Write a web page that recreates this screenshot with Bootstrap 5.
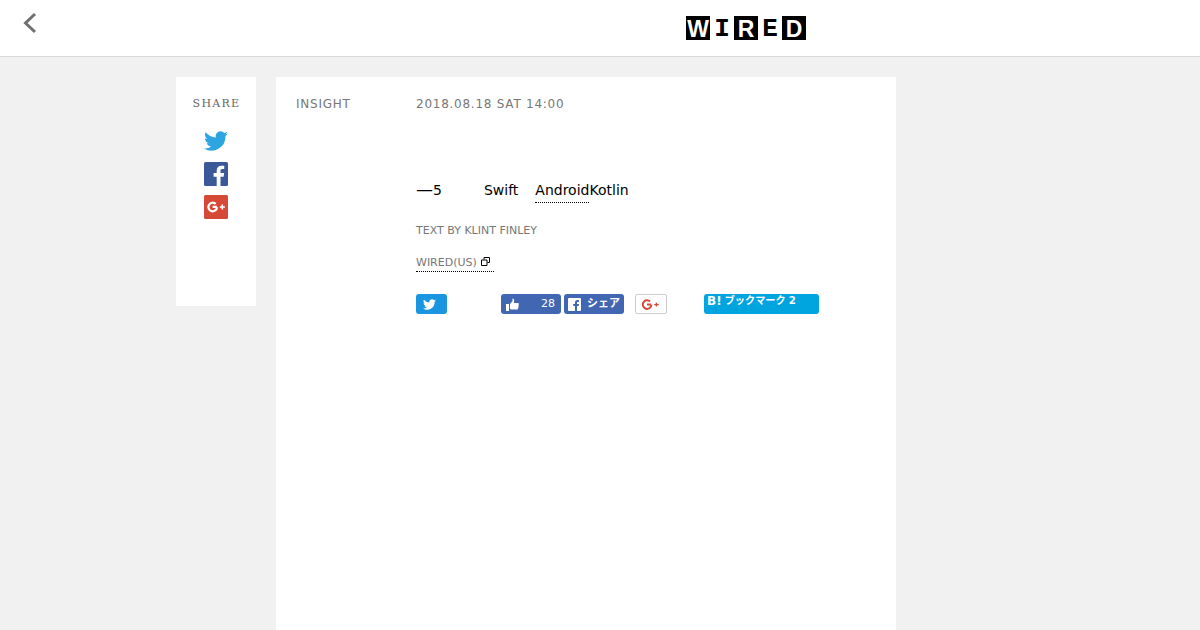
<!DOCTYPE html>
<html lang="ja">
<head>
    <meta charset="UTF-8">
    <title>WIRED</title>
    <link href="https://cdn.jsdelivr.net/npm/bootstrap@5.3.3/dist/css/bootstrap.min.css" rel="stylesheet" />
    <script src="https://cdn.jsdelivr.net/npm/bootstrap@5.3.3/dist/js/bootstrap.bundle.min.js"></script>
    <style>
        html, body { height: 630px; overflow: hidden; }
        body { background: #f1f1f1; font-family: "DejaVu Sans", sans-serif; color: #000; }
        .site-head { height: 57px; background: #fff; border-bottom: 1px solid #d9d9d9; padding-left: 20px; }
        .back-btn { width: 20px; height: 48px; }
        .logo-wrap { margin-left: 646px; padding-top: 16px; }
        .logo-cell { width: 24px; height: 24px; text-align: center; }
        .logo-on { background: #000; color: #fff; font: bold 23px/26px "Liberation Sans", sans-serif; }
        .logo-off { background: #fff; color: #000; font: bold 26px/26px "Liberation Mono", monospace; }
        .page-wrap { padding: 20px 0 0 176px; gap: 20px; }
        .share-box { width: 80px; height: 229px; background: #fff; padding-top: 20px; }
        .share-title { font: 11px/14px "DejaVu Serif", "Liberation Mono", serif; letter-spacing: 1.300px; color: #666; margin-bottom: 18px; padding-left: 1px; }
        .share-icons { gap: 9px; }
        .article-box { width: 620px; height: 553px; background: #fff; padding: 20px; }
        .meta-line { font-size: 12px; line-height: 14px; letter-spacing: .75px; color: #777; }
        .meta-cat { width: 120px; }
        .article-body { margin: 69px 0 0 120px; }
        .head-line { font-size: 14px; line-height: 20px; height: 26px; }
        .head-dash { font-size: 17px; line-height: 1; }
        .head-gap { margin-left: 42px; }
        .head-gap2 { margin-left: 17px; }
        .dot-under { display: inline-block; height: 23px; border-bottom: 1px dotted #000; }
        .credit { font-size: 11px; line-height: 14px; color: #777; margin-top: 18px; }
        .source { width: 78px; height: 16px; margin-top: 18px; font-size: 11px; line-height: 14px; color: #777; border-bottom: 1px dotted #000; gap: 4px; }
        .source svg { margin-top: 1px; }
        .social-row { margin-top: 22px; height: 20px; }
        .sns { height: 20px; border-radius: 3px; color: #fff; }
        .sns-tw { width: 31px; background: #1b95e0; padding-left: 7px; }
        .sns-like { width: 60px; margin-left: 54px; background: #4267b2; font-size: 11px; padding: 0 6px 0 5px; }
        .sns-fb { width: 60px; margin-left: 3px; background: #4267b2; font: bold 11px/14px "DejaVu Sans", "Noto Sans CJK JP", sans-serif; padding: 0 4px; }
        .sns-gp { width: 32px; margin-left: 11px; background: #fff; border: 1px solid #ccc; border-radius: 2px; }
        .sns-hb { width: 115px; margin-left: 37px; padding: 0 3px; gap: 3px; background: #00a4de; border-radius: 3px; font: bold 10.200px/14px "DejaVu Sans", "Noto Sans CJK JP", sans-serif; }
        .hb-b { font-size: 12px; }
    </style>
</head>
<body>
<header class="site-head d-flex align-items-start">
    <a class="back-btn d-flex align-items-center" href="#" aria-label="back">
        <svg width="20" height="48" viewBox="0 0 20 48"><path d="M15 14 L5.500 23 L15 32" fill="none" stroke="#707070" stroke-width="3"/></svg>
    </a>
    <div class="logo-wrap d-flex">
        <span class="logo-cell logo-on">W</span>
        <span class="logo-cell logo-off">I</span>
        <span class="logo-cell logo-on">R</span>
        <span class="logo-cell logo-off">E</span>
        <span class="logo-cell logo-on">D</span>
    </div>
</header>

<div class="page-wrap d-flex align-items-start">
    <aside class="share-box text-center">
        <div class="share-title">SHARE</div>
        <div class="share-icons d-flex flex-column align-items-center">
            <!-- twitter -->
            <svg width="24" height="24" viewBox="0 0 24 24"><path fill="#2da5e1" d="M24 4.600a9.800 9.800 0 0 1-2.800.8 4.900 4.900 0 0 0 2.200-2.700 9.800 9.800 0 0 1-3.100 1.200 4.900 4.900 0 0 0-8.400 4.500A14 14 0 0 1 1.700 3.200a4.900 4.900 0 0 0 1.500 6.600 4.900 4.900 0 0 1-2.200-.6 4.900 4.900 0 0 0 3.900 4.800 4.900 4.900 0 0 1-2.200.1 4.900 4.900 0 0 0 4.600 3.400A9.900 9.900 0 0 1 0 19.500 14 14 0 0 0 21.500 7.100 10 10 0 0 0 24 4.600z"/></svg>
            <!-- facebook -->
            <svg width="24" height="24" viewBox="0 0 24 24"><rect width="24" height="24" rx="1.500" fill="#3b5998"/><path fill="#fff" d="M16.500 24v-9.300h3.100l.5-3.600h-3.600V8.800c0-1 .3-1.800 1.800-1.800h1.900V3.800c-.3 0-1.500-.1-2.800-.1-2.800 0-4.700 1.700-4.700 4.800v2.600H9.600v3.600h3.100V24z"/></svg>
            <!-- google plus -->
            <svg width="24" height="24" viewBox="0 0 24 24"><rect width="24" height="24" rx="1.500" fill="#d64937"/><path fill="none" stroke="#fff" stroke-width="2.200" d="M12.800 11.900H8.600 M13 12.100a4.300 4.300 0 1 1-1.300-3.200"/><path fill="#fff" d="M17.500 9.500h1.600v1.800h1.800v1.500h-1.800v1.800h-1.600v-1.800h-1.700v-1.500h1.700z"/></svg>
        </div>
    </aside>

    <main class="article-box">
        <div class="meta-line d-flex">
            <div class="meta-cat">INSIGHT</div>
            <div>2018.08.18 SAT 14:00</div>
        </div>
        <div class="article-body">
            <div class="head-line"><span class="head-dash">—</span>5<span class="head-gap">Swift</span><span class="head-gap2 dot-under">Android</span>Kotlin</div>
            <div class="credit">TEXT BY KLINT FINLEY</div>
            <div class="source d-flex align-items-start">
                <span>WIRED(US)</span>
                <svg width="9" height="9" viewBox="0 0 9 9"><path fill="none" stroke="#000" d="M3 2.500V.5h5.500v5H6.500 M.5 3h5.500v5.500H.5z"/></svg>
            </div>
            <div class="social-row d-flex">
                <div class="sns sns-tw d-flex align-items-center">
                    <svg width="13" height="13" viewBox="0 0 24 24"><path fill="#fff" d="M24 4.600a9.800 9.800 0 0 1-2.800.8 4.900 4.900 0 0 0 2.200-2.700 9.800 9.800 0 0 1-3.100 1.200 4.900 4.900 0 0 0-8.400 4.500A14 14 0 0 1 1.700 3.200a4.900 4.900 0 0 0 1.500 6.600 4.900 4.900 0 0 1-2.200-.6 4.900 4.900 0 0 0 3.900 4.800 4.900 4.900 0 0 1-2.200.1 4.900 4.900 0 0 0 4.600 3.400A9.900 9.900 0 0 1 0 19.500 14 14 0 0 0 21.500 7.100 10 10 0 0 0 24 4.600z"/></svg>
                </div>
                <div class="sns sns-like d-flex align-items-center justify-content-between">
                    <svg width="13" height="13" viewBox="0 0 13 13"><path fill="#fff" d="M0 6h3v7H0z M4 6l2.500-3V0.500C8 0.500 8.500 2 8 4l-.3 1H12c1 0 1 1.200.5 1.700.5.500.4 1.400-.1 1.800.3.600.1 1.300-.4 1.600.2.700-.2 1.400-1 1.400H6c-1 0-2-.5-2-.5z"/></svg>
                    <span>28</span>
                </div>
                <div class="sns sns-fb d-flex align-items-center justify-content-between">
                    <svg width="13" height="13" viewBox="0 0 14 14"><rect width="14" height="14" rx="1" fill="#fff"/><path fill="#4267b2" d="M9.700 14V8.600h1.800l.3-2.100H9.700V5.200c0-.6.200-1 1-1h1.100V2.300c-.2 0-.9-.1-1.600-.1-1.600 0-2.700 1-2.700 2.800v1.500H5.600v2.100h1.900V14z"/></svg>
                    <span>シェア</span>
                </div>
                <div class="sns sns-gp d-flex align-items-center justify-content-center">
                    <svg width="19" height="11" viewBox="0 0 19 11"><path fill="none" stroke="#d64937" stroke-width="2" d="M9 5.600H5 M9.400 5.700a4.300 4.300 0 1 1-1.300-3.200"/><path fill="#d64937" d="M13.700 3.800h1.400v1.100h1.600v1.400h-1.600v1.300h-1.400V6.300h-1.500V4.900h1.500z"/></svg>
                </div>
                <div class="sns sns-hb d-flex align-items-start"><span class="hb-b">B!</span><span>ブックマーク</span><span>2</span></div>
            </div>
        </div>
    </main>
</div>
</body>
</html>
